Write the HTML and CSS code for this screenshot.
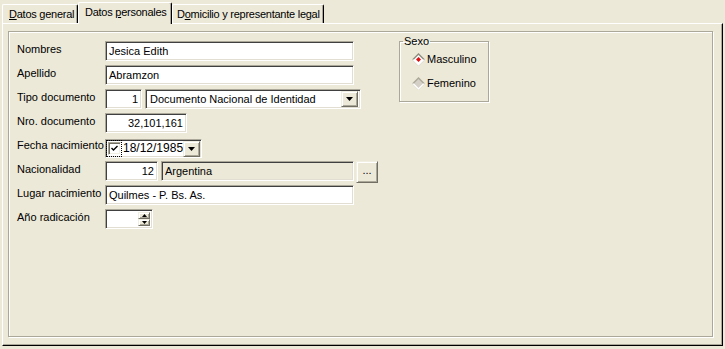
FILE: index.html
```html
<!DOCTYPE html>
<html lang="es">
<head>
    <meta charset="UTF-8">
    <title>Datos personales</title>
    <link rel="stylesheet" href="styles.css">
</head>
<body>
    <div class="tabs">
        <div class="tab tab-general"><u>D</u>atos general</div>
        <div class="tab tab-personal active">Datos <u>p</u>ersonales</div>
        <div class="tab tab-domicilio">D<u>o</u>micilio y representante legal</div>
    </div>

    <div class="panel">
        <div class="frame">
            <div class="form">
                <div class="row">
                    <label class="lbl">Nombres</label>
                    <input class="field w-long" type="text" value="Jesica Edith">
                </div>
                <div class="row">
                    <label class="lbl">Apellido</label>
                    <input class="field w-long" type="text" value="Abramzon">
                </div>
                <div class="row">
                    <label class="lbl">Tipo documento</label>
                    <div class="ctrls">
                        <input class="field num w-code" type="text" value="1">
                        <div class="combo">
                            <span class="combo-text">Documento Nacional de Identidad</span>
                            <span class="btn drop"><svg width="7" height="4" viewBox="0 0 7 4"><polygon points="0,0 7,0 3.5,4" fill="#000"/></svg></span>
                        </div>
                    </div>
                </div>
                <div class="row">
                    <label class="lbl">Nro. documento</label>
                    <input class="field num w-doc" type="text" value="32,101,161">
                </div>
                <div class="row">
                    <label class="lbl">Fecha nacimiento</label>
                    <div class="date">
                        <span class="focus">
                            <span class="check"><svg width="9" height="9" viewBox="0 0 9 9"><path d="M1.5 4 L3.5 6 L7.5 2" stroke="#000" stroke-width="1.4" fill="none"/></svg></span>
                        </span>
                        <span class="date-text">18/12/1985</span>
                        <span class="btn drop"><svg width="7" height="4" viewBox="0 0 7 4"><polygon points="0,0 7,0 3.5,4" fill="#000"/></svg></span>
                    </div>
                </div>
                <div class="row">
                    <label class="lbl">Nacionalidad</label>
                    <div class="ctrls">
                        <input class="field num w-nac" type="text" value="12">
                        <input class="field ro w-pais" type="text" value="Argentina" readonly>
                        <span class="btn dots">...</span>
                    </div>
                </div>
                <div class="row">
                    <label class="lbl">Lugar nacimiento</label>
                    <input class="field w-long" type="text" value="Quilmes - P. Bs. As.">
                </div>
                <div class="row">
                    <label class="lbl">Año radicación</label>
                    <div class="spin">
                        <span class="spin-text"></span>
                        <span class="spin-btns">
                            <span class="btn spin-btn"><svg width="5" height="3" viewBox="0 0 5 3"><polygon points="2.5,0 5,3 0,3" fill="#000"/></svg></span>
                            <span class="btn spin-btn"><svg width="5" height="3" viewBox="0 0 5 3"><polygon points="0,0 5,0 2.5,3" fill="#000"/></svg></span>
                        </span>
                    </div>
                </div>
            </div>

            <fieldset class="sexo">
                <legend>Sexo</legend>
                <div class="radio">
                    <svg width="13" height="13" viewBox="0 0 13 13">
                        <polygon points="6.5,0 13,6.5 6.5,13 0,6.5" fill="#8e8b7e"/>
                        <polygon points="0,6.5 13,6.5 6.5,13" fill="#fff"/>
                        <polygon points="6.5,2 11,6.5 6.5,11 2,6.5" fill="#fff"/>
                        <polygon points="6.5,4 9,6.5 6.5,9 4,6.5" fill="#e01010"/>
                    </svg>
                    <span>Masculino</span>
                </div>
                <div class="radio">
                    <svg width="13" height="13" viewBox="0 0 13 13">
                        <polygon points="6.5,0 13,6.5 6.5,13 0,6.5" fill="#aca899"/>
                        <polygon points="0,6.5 13,6.5 6.5,13" fill="#fff"/>
                        <polygon points="6.5,2 11,6.5 6.5,11 2,6.5" fill="#d4d0c8"/>
                    </svg>
                    <span>Femenino</span>
                </div>
            </fieldset>
        </div>
    </div>
</body>
</html>
```

FILE: styles.css
```css
/* Classic Windows dialog look */
body {
    margin: 0;
    height: 349px;
    overflow: hidden;
    background-color: #ece9d8;
    font-family: "Liberation Sans", Arial, sans-serif;
    font-size: 11px;
    line-height: 13px;
    color: #000;
}

u {
    text-decoration-thickness: 1px;
    text-underline-offset: 1px;
}

/* Tab strip */
.tabs {
    display: flex;
    align-items: flex-end;
    height: 23px;
    padding-left: 2px;
}

.tab {
    box-sizing: border-box;
    height: 19px;
    padding: 3px 0 0 6px;
    border-top: 1px solid #fff;
    border-left: 1px solid #fff;
    border-right: 1px solid #000;
    box-shadow: inset -1px 0 0 #aca899;
    border-radius: 2px 2px 0 0;
    letter-spacing: -0.25px;
    white-space: nowrap;
    overflow: hidden;
}

.tab-general {
    width: 76px;
}

.tab-personal {
    width: 94px;
}

.tab-domicilio {
    width: 152px;
    padding-left: 4px;
}

.tab.active {
    position: relative;
    z-index: 1;
    height: 22px;
    margin-bottom: -1px;
    background-color: #ece9d8;
}

/* Tab page */
.panel {
    box-sizing: border-box;
    display: flex;
    height: 323px;
    margin: 0 2px 0 2px;
    padding: 7px 9px 8px 5px;
    border: 1px solid;
    border-color: #fff #000 #000 #fff;
    box-shadow: inset -1px -1px 0 #aca899;
}

.frame {
    flex: 1;
    display: flex;
    align-items: flex-start;
    gap: 20px;
    padding: 3px 0 0 8px;
    border: 1px solid #aca899;
    box-shadow: inset 1px 1px 0 #fff, 1px 1px 0 #fff;
}

.form {
    display: flex;
    flex-direction: column;
    gap: 4px;
    width: 362px;
    margin-top: 6px;
}

.row {
    display: flex;
    height: 20px;
}

.lbl {
    flex: 0 0 88px;
    padding-top: 2px;
    white-space: nowrap;
}

.ctrls {
    display: flex;
    gap: 3px;
}

/* Sunken edit boxes */
.field,
.combo,
.date,
.spin {
    box-sizing: border-box;
    height: 20px;
    border: 1px solid;
    border-color: #aca899 #fff #fff #aca899;
    box-shadow: inset 1px 1px 0 #404040, inset -1px -1px 0 #e2dfd2;
    background-color: #fff;
}

.field {
    margin: 0;
    padding: 0 3px;
    font: inherit;
    line-height: 16px;
    color: #000;
    outline: none;
}

.num {
    text-align: right;
}

.ro {
    background-color: #ece9d8;
}

.w-long {
    width: 249px;
}

.w-code {
    width: 37px;
}

.w-doc {
    width: 82px;
}

.w-nac {
    width: 53px;
}

.w-pais {
    width: 193px;
}

/* Raised buttons */
.btn {
    box-sizing: border-box;
    display: flex;
    align-items: center;
    justify-content: center;
    border: 1px solid;
    border-color: #f1efe2 #716f64 #716f64 #f1efe2;
    box-shadow: inset 1px 1px 0 #fff, inset -1px -1px 0 #aca899;
    background-color: #ece9d8;
}

.combo {
    display: flex;
    align-items: center;
    width: 216px;
    padding: 2px 2px 2px 4px;
}

.combo-text {
    flex: 1;
    white-space: nowrap;
}

.drop {
    width: 17px;
    height: 16px;
}

.date {
    display: flex;
    align-items: center;
    width: 97px;
    height: 19px;
    margin-top: 2px;
    padding: 1px 1px 1px 0;
}

.focus {
    padding: 1px 0 1px 1px;
    border: 1px dotted #000;
}

.check {
    box-sizing: border-box;
    display: flex;
    align-items: center;
    justify-content: center;
    width: 13px;
    height: 13px;
    border: 1px solid;
    border-color: #aca899 #fff #fff #aca899;
    box-shadow: inset 1px 1px 0 #716f64, inset -1px -1px 0 #f1efe2;
    background-color: #fff;
}

.date-text {
    flex: 1;
    padding-left: 1px;
    font-size: 12px;
}

.dots {
    width: 22px;
    height: 22px;
    margin-left: -1px;
    padding-bottom: 4px;
    font-size: 11px;
}

.spin {
    display: flex;
    width: 48px;
    padding: 2px;
}

.spin-text {
    flex: 1;
}

.spin-btns {
    display: flex;
    flex-direction: column;
    width: 12px;
}

.spin-btn {
    flex: 1;
}

/* Sexo group box */
.sexo {
    box-sizing: border-box;
    width: 90px;
    margin: 0;
    padding: 5px 0 11px 3px;
    border: 1px solid #aca899;
    box-shadow: inset 1px 1px 0 #fff, 1px 1px 0 #fff;
}

.sexo legend {
    padding: 0 1px;
    line-height: 13px;
}

.radio {
    display: flex;
    align-items: center;
    gap: 2px;
    height: 13px;
    padding-left: 9px;
}

.radio + .radio {
    margin-top: 11px;
}
```
